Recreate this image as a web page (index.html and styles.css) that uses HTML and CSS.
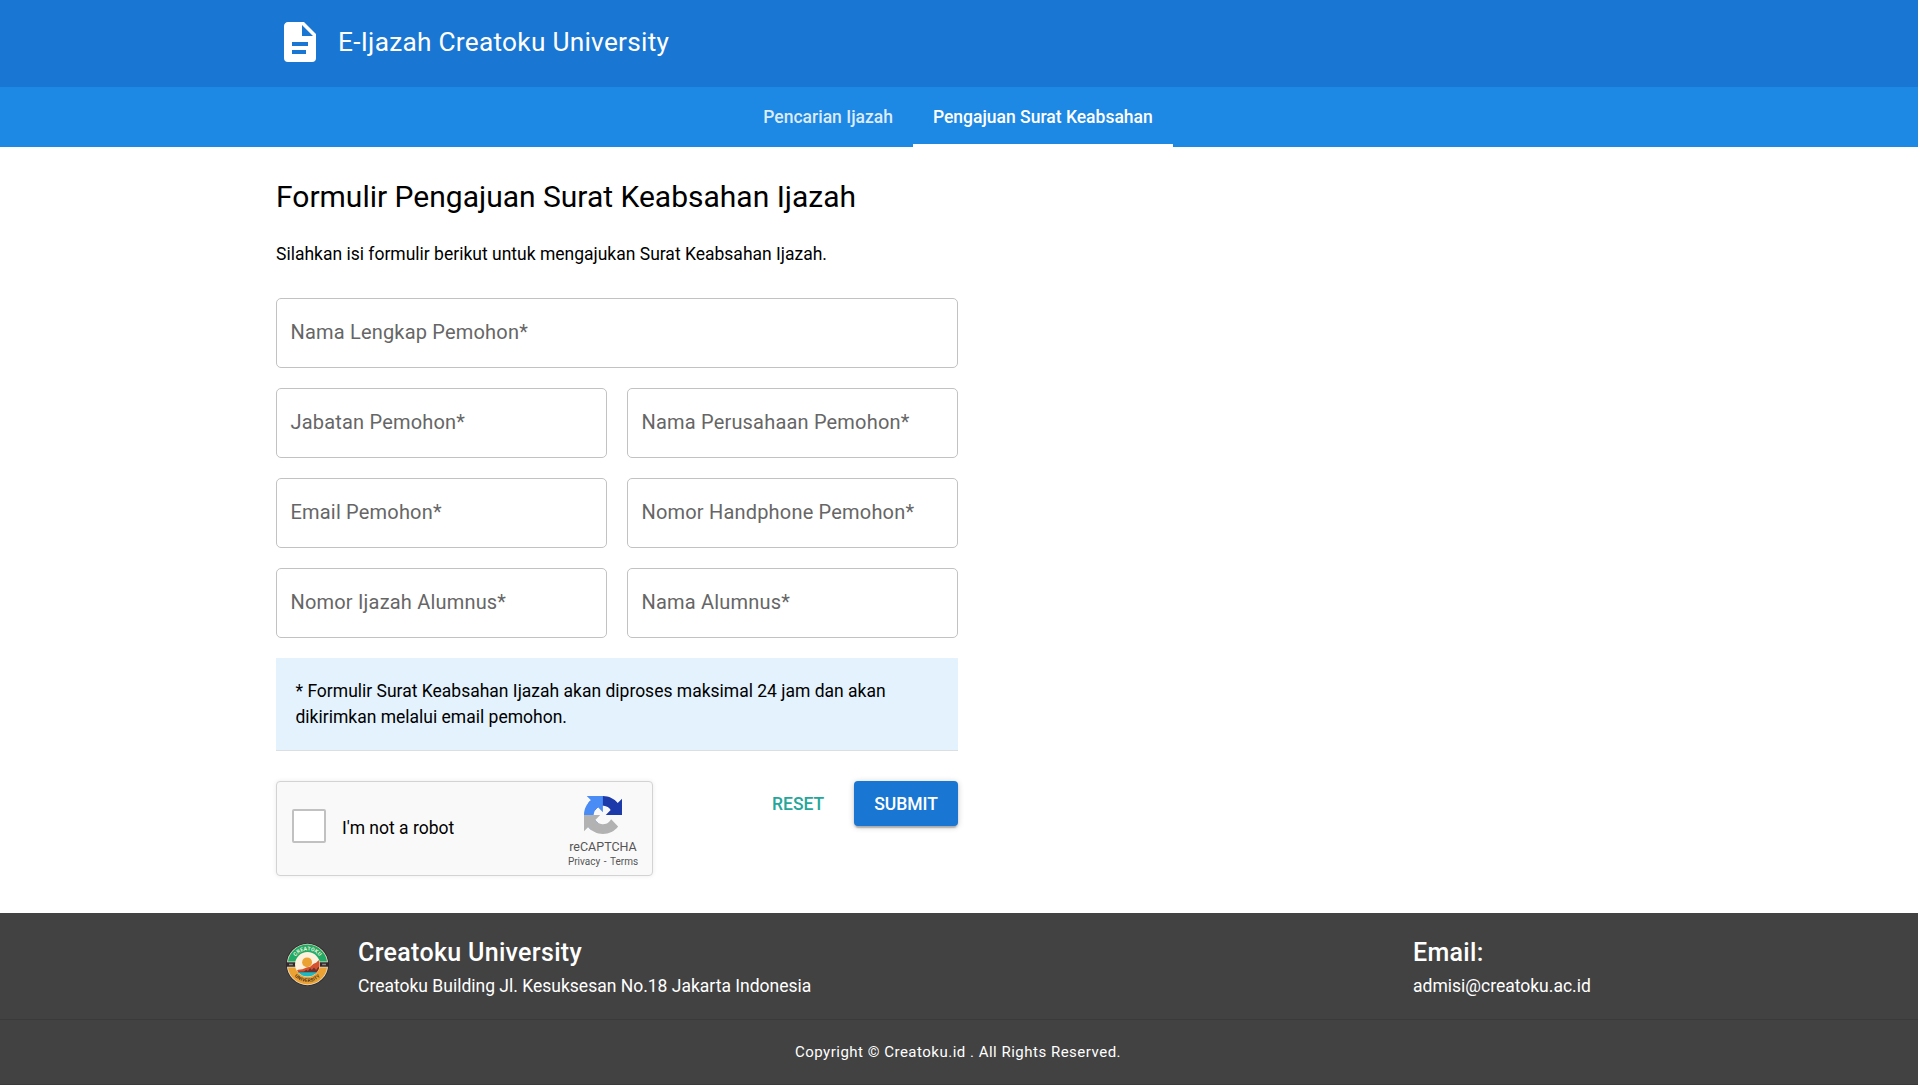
FILE: index.html
```
<!DOCTYPE html>
<html lang="id">
<head>
<meta charset="utf-8">
<title>E-Ijazah Creatoku University</title>
<link rel="stylesheet" href="styles.css">
</head>
<body>
<header class="header">
  <div class="container brand">
    <svg class="brand-icon" viewBox="0 0 24 24" aria-hidden="true"><path fill="currentColor" d="M13 9h5.500L13 3.500V9M6 2h8l6 6v12a2 2 0 0 1-2 2H6a2 2 0 0 1-2-2V4c0-1.110.89-2 2-2m9 16v-2H8v2h7m1-4v-2H8v2h8z"/></svg>
    <span class="brand-title">E-Ijazah Creatoku University</span>
  </div>
</header>
<nav class="tabs">
  <a class="tab">Pencarian Ijazah</a>
  <a class="tab tab-active">Pengajuan Surat Keabsahan</a>
</nav>
<main class="container main">
  <h1 class="title">Formulir Pengajuan Surat Keabsahan Ijazah</h1>
  <p class="intro">Silahkan isi formulir berikut untuk mengajukan Surat Keabsahan Ijazah.</p>
  <form class="form">
    <div class="fields">
      <label class="field field-wide">Nama Lengkap Pemohon*</label>
      <label class="field">Jabatan Pemohon*</label>
      <label class="field">Nama Perusahaan Pemohon*</label>
      <label class="field">Email Pemohon*</label>
      <label class="field">Nomor Handphone Pemohon*</label>
      <label class="field">Nomor Ijazah Alumnus*</label>
      <label class="field">Nama Alumnus*</label>
    </div>
    <p class="note">* Formulir Surat Keabsahan Ijazah akan diproses maksimal 24 jam dan akan dikirimkan melalui email pemohon.</p>
    <div class="actions">
      <div class="captcha">
        <span class="captcha-box"></span>
        <span class="captcha-label">I'm not a robot</span>
        <div class="captcha-brand">
          <svg class="captcha-logo" viewBox="0 0 64 64" aria-hidden="true">
            <path fill="#1c3aa9" d="M64 31.955l-.033-1.370V4.687l-7.160 7.160C50.903 4.674 41.983.094 31.994.094c-10.395 0-19.630 4.960-25.474 12.640l11.736 11.860a15.550 15.550 0 0 1 4.754-5.334c2.050-1.600 4.952-2.906 8.968-2.906.485 0 .86.057 1.135.163 4.976.393 9.288 3.140 11.828 7.124l-8.307 8.307L64 31.953"/>
            <path fill="#4a8cf5" d="M31.862.094l-1.370.033H4.594l7.160 7.160C4.580 13.147 0 22.067 0 32.056c0 10.395 4.960 19.630 12.640 25.474L24.500 45.794a15.550 15.550 0 0 1-5.334-4.754c-1.600-2.050-2.906-4.952-2.906-8.968 0-.485.057-.86.163-1.135.393-4.976 3.140-9.288 7.124-11.828l8.307 8.307L31.860.095"/>
            <path fill="#b2b2b2" d="M.001 31.955l.033 1.370v25.898l7.160-7.160c5.860 7.173 14.780 11.753 24.770 11.753 10.395 0 19.630-4.960 25.474-12.640l-11.736-11.860a15.550 15.550 0 0 1-4.754 5.334c-2.050 1.600-4.952 2.906-8.968 2.906-.485 0-.86-.057-1.135-.163-4.976-.393-9.288-3.140-11.828-7.124l8.307-8.307z"/>
          </svg>
          <span class="captcha-name">reCAPTCHA</span>
          <span class="captcha-links"><a>Privacy</a><span>-</span><a>Terms</a></span>
        </div>
      </div>
      <div class="buttons">
        <button type="reset" class="btn btn-flat">RESET</button>
        <button type="button" class="btn btn-primary">SUBMIT</button>
      </div>
    </div>
  </form>
</main>
<footer class="footer">
  <div class="container footer-info">
    <div class="school">
      <svg class="school-logo" viewBox="0 0 100 100" aria-hidden="true">
        <defs>
          <clipPath id="scene"><circle cx="50" cy="50" r="28"/></clipPath>
          <path id="arc-top" d="M17 50a33 33 0 0 1 66 0"/>
          <path id="arc-bottom" d="M9.500 50a40.500 40.500 0 0 0 81 0"/>
        </defs>
        <circle cx="50" cy="50" r="50" fill="#302a2c"/>
        <circle cx="50" cy="50" r="48" fill="#eadfc9"/>
        <path fill="#21ab66" d="M4.500 43a46 46 0 0 1 91 0z"/>
        <path fill="#eba232" d="M4.500 57a46 46 0 0 0 91 0z"/>
        <path fill="#302a2c" d="M0 45h100v10H0z"/>
        <path fill="#8d8580" d="M7 48h9v4H7zM84 48h9v4h-9z"/>
        <circle cx="50" cy="50" r="29" fill="#fdf0dc"/>
        <g clip-path="url(#scene)">
          <circle cx="49" cy="45" r="11.500" fill="#eba232"/>
          <path fill="#d4532e" d="M20 68l8-6 10-1 10-4 8-2 8-7 6-2 8-8 8 2v28H20z"/>
          <path fill="#6e302b" d="M20 70V66l7 1 15-1 5-4 4 3 5-7 4 5 5-6 5 6 5-7 7 4v12z"/>
          <path fill="#1cb9c0" d="M20 68h60v15H20z"/>
        </g>
        <text class="school-logo-top"><textPath href="#arc-top" startOffset="50%" text-anchor="middle">CREATOKU</textPath></text>
        <text class="school-logo-bottom"><textPath href="#arc-bottom" startOffset="50%" text-anchor="middle">UNIVERSITY</textPath></text>
      </svg>
      <div>
        <h2 class="footer-title">Creatoku University</h2>
        <p class="footer-text">Creatoku Building Jl. Kesuksesan No.18 Jakarta Indonesia</p>
      </div>
    </div>
    <div class="contact">
      <h2 class="footer-title">Email:</h2>
      <p class="footer-text">admisi@creatoku.ac.id</p>
    </div>
  </div>
  <p class="copyright">Copyright © Creatoku.id . All Rights Reserved.</p>
</footer>
</body>
</html>
```

FILE: styles.css
```
*, *::before, *::after { box-sizing: border-box; }

body {
  margin: 0;
  min-height: 100vh;
  display: flex;
  flex-direction: column;
  font: 400 17.5px/26px Roboto, sans-serif;
  color: #000;
  background: #fff;
}

h1, h2, p { margin: 0; }

.container {
  width: 1366px;
  margin: 0 auto;
}

/* Header and tabs */
.header {
  height: 87px;
  padding-top: 18px;
  background: #1976d2;
  color: #fff;
}

.brand {
  display: flex;
  align-items: center;
  gap: 14px;
}

.brand-icon {
  width: 48px;
  height: 48px;
}

.brand-title {
  font-size: 26.25px;
  line-height: 48px;
  letter-spacing: .01em;
}

.tabs {
  display: flex;
  justify-content: center;
  height: 60px;
  padding-right: 2px;
  background: #1e88e5;
  color: #fff;
}

.tab {
  padding: 0 20px;
  font-weight: 500;
  line-height: 60px;
  color: rgba(255, 255, 255, .85);
}

.tab-active {
  color: #fff;
  box-shadow: inset 0 -3px #fff;
}

/* Request form */
.main {
  flex: none;
  height: 766px;
  padding-top: 30px;
}

.title {
  font-size: 30px;
  font-weight: 400;
  line-height: 40px;
}

.intro { margin: 24px 0 31px; }

.form { width: 682px; }

.fields {
  display: grid;
  grid-template-columns: 1fr 1fr;
  gap: 20px;
}

.field {
  height: 70px;
  padding: 0 14px 0 13.5px;
  border: 1px solid #c2c2c2;
  border-radius: 5px;
  font-size: 20px;
  line-height: 66px;
  letter-spacing: .00937em;
  color: #666;
}

.field-wide { grid-column: 1 / -1; }

.note {
  height: 93px;
  margin-top: 20px;
  padding: 20px 19.5px;
  background: #e3f2fd;
  border-bottom: 1px solid #dadfe3;
}

.intro + .form { margin-top: 31.25px; }

.actions {
  display: flex;
  justify-content: space-between;
  align-items: flex-start;
  margin-top: 30px;
}

.captcha {
  display: flex;
  width: 377px;
  height: 95px;
  border: 1px solid #d3d3d3;
  border-radius: 4px;
  background: #f9f9f9;
  box-shadow: 0 0 5px rgba(0, 0, 0, .08);
}

.captcha-box {
  width: 34px;
  height: 34px;
  margin: 27px 16px 0 15px;
  border: 2px solid #c1c1c1;
  border-radius: 2px;
  background: #fff;
}

.captcha-label {
  flex: 1;
  padding-top: 33px;
}

.captcha-brand {
  display: flex;
  flex-direction: column;
  align-items: center;
  width: 72px;
  margin-right: 13px;
  padding-top: 14px;
  color: #555;
}

.captcha-logo {
  width: 38px;
  height: 38px;
}

.captcha-name {
  margin-top: 5px;
  font-size: 12.5px;
  line-height: 16px;
}

.captcha-links {
  display: flex;
  gap: 3.5px;
  font-size: 10px;
  line-height: 14px;
}

.buttons {
  display: flex;
  gap: 10px;
}

.btn {
  height: 45px;
  padding: 1px 20px 0;
  border: 0;
  border-radius: 4px;
  background: none;
  font: 500 17.5px/44px Roboto, sans-serif;
}

.btn-flat { color: #26a69a; }

.btn-primary {
  background: #1976d2;
  color: #fff;
  box-shadow: 0 1px 6px rgba(0, 0, 0, .2), 0 2px 2px rgba(0, 0, 0, .14), 0 4px 1px -2px rgba(0, 0, 0, .12);
}

/* Footer */
.footer {
  height: 172px;
  background: #424242;
  border-bottom: 1px solid #3a3a3a;
  color: #fff;
}

.footer-info {
  display: flex;
  justify-content: space-between;
  height: 106px;
  padding-top: 20px;
}

.school {
  display: flex;
  align-items: flex-start;
  gap: 29px;
  padding-left: 10px;
}

.school-logo {
  width: 43px;
  height: 43px;
  margin-top: 9.5px;
}

.school-logo-top,
.school-logo-bottom {
  font: 700 12px Roboto, sans-serif;
  letter-spacing: .5px;
}

.school-logo-top { fill: #f4f0dc; }
.school-logo-bottom { fill: #4a3220; font-size: 11px; }

.contact { width: 229px; }

.footer-title {
  font-size: 25px;
  font-weight: 500;
  line-height: 40px;
  letter-spacing: .0125em;
}

.copyright {
  height: 65px;
  padding-right: 2px;
  border-top: 1px solid #3a3a3a;
  font-size: 15px;
  line-height: 64px;
  letter-spacing: .03333em;
  text-align: center;
}
```
